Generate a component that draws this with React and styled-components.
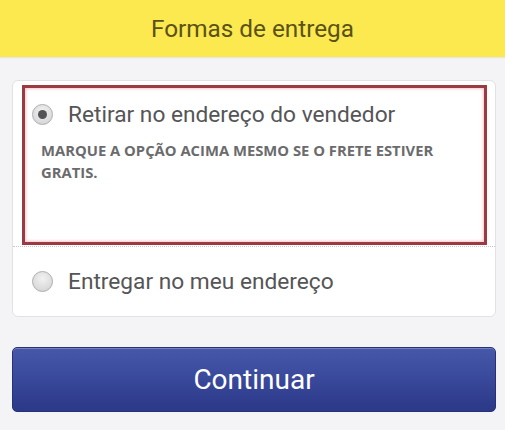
import styled, { createGlobalStyle } from "styled-components";

const GlobalStyle = createGlobalStyle`
  html, body {
    margin: 0;
    padding: 0;
    background: #f4f4f6;
    font-family: Roboto, "Liberation Sans", sans-serif;
  }
`;

const Page = styled.div`
  width: 505px;
  height: 430px;
  background: #f4f4f6;
`;

const Header = styled.header`
  height: 57px;
  background: #fbe94f;
  display: flex;
  align-items: center;
  justify-content: center;
  box-shadow: 0 1px 1px rgba(0, 0, 0, 0.06);
`;

const Title = styled.h1`
  margin: 0;
  font-size: 24.3px;
  font-weight: 400;
  color: #5a5218;
`;

const Content = styled.main`
  padding: 23px 9px 0 12px;
`;

const Card = styled.div`
  background: #fff;
  border: 1px solid #e2e2e4;
  border-radius: 6px;
  overflow: hidden;
`;

const Option = styled.div`
  padding: ${(p) => (p.$first ? "4px 8px 1px 9px" : "0 9px")};
  height: ${(p) => (p.$first ? "auto" : "69px")};
  display: flex;
  flex-direction: column;
  justify-content: center;
  border-bottom: ${(p) => (p.$first ? "1px dotted #c9c9cc" : "none")};
`;

const Highlight = styled.div`
  box-sizing: border-box;
  height: 160px;
  border: 3px solid #9b3a41;
  box-shadow: inset 0 0 3px 1px #f4c6cc;
  padding: 13px 12px 0 7px;
`;

const Row = styled.label`
  display: flex;
  align-items: center;
  gap: 15px;
  height: 26px;
  padding-left: ${(p) => (p.$inset ? "10px" : "0")};
`;

const Radio = styled.span`
  box-sizing: border-box;
  width: 21px;
  height: 21px;
  border-radius: 50%;
  border: 1px solid #adadb0;
  background: radial-gradient(circle at 50% 35%, #f2f2f2 0%, #dadadc 70%, #cdcdd0 100%);
  display: flex;
  align-items: center;
  justify-content: center;
  flex-shrink: 0;

  &::after {
    content: "";
    width: 9px;
    height: 9px;
    border-radius: 50%;
    background: ${(p) => (p.$checked ? "#545456" : "transparent")};
  }
`;

const Label = styled.span`
  font-size: 22.7px;
  color: #555557;
  white-space: nowrap;
`;

const Note = styled.p`
  margin: 12px 0 0 9px;
  font-family: "Open Sans", "Liberation Sans", sans-serif;
  font-weight: 700;
  font-size: 14.8px;
  line-height: 22px;
  color: #6b6b6d;
  text-transform: uppercase;
`;

const Button = styled.button`
  display: block;
  box-sizing: border-box;
  width: 484px;
  height: 65px;
  margin: 30px 0 0;
  border: 1px solid #27307a;
  border-radius: 5px;
  background: linear-gradient(to bottom, #4658a9 0%, #3a4a9c 45%, #2c3888 100%);
  color: #fff;
  font-family: Roboto, "Liberation Sans", sans-serif;
  font-size: 28px;
  box-shadow: inset 0 1px 0 rgba(255, 255, 255, 0.25);
`;

export default function App() {
  return (
    <Page>
      <GlobalStyle />
      <Header>
        <Title>Formas de entrega</Title>
      </Header>
      <Content>
        <Card>
          <Option $first>
            <Highlight>
              <Row>
                <Radio $checked />
                <Label>Retirar no endereço do vendedor</Label>
              </Row>
              <Note>Marque a opção acima mesmo se o frete estiver gratis.</Note>
            </Highlight>
          </Option>
          <Option>
            <Row $inset>
              <Radio />
              <Label>Entregar no meu endereço</Label>
            </Row>
          </Option>
        </Card>
        <Button>Continuar</Button>
      </Content>
    </Page>
  );
}
